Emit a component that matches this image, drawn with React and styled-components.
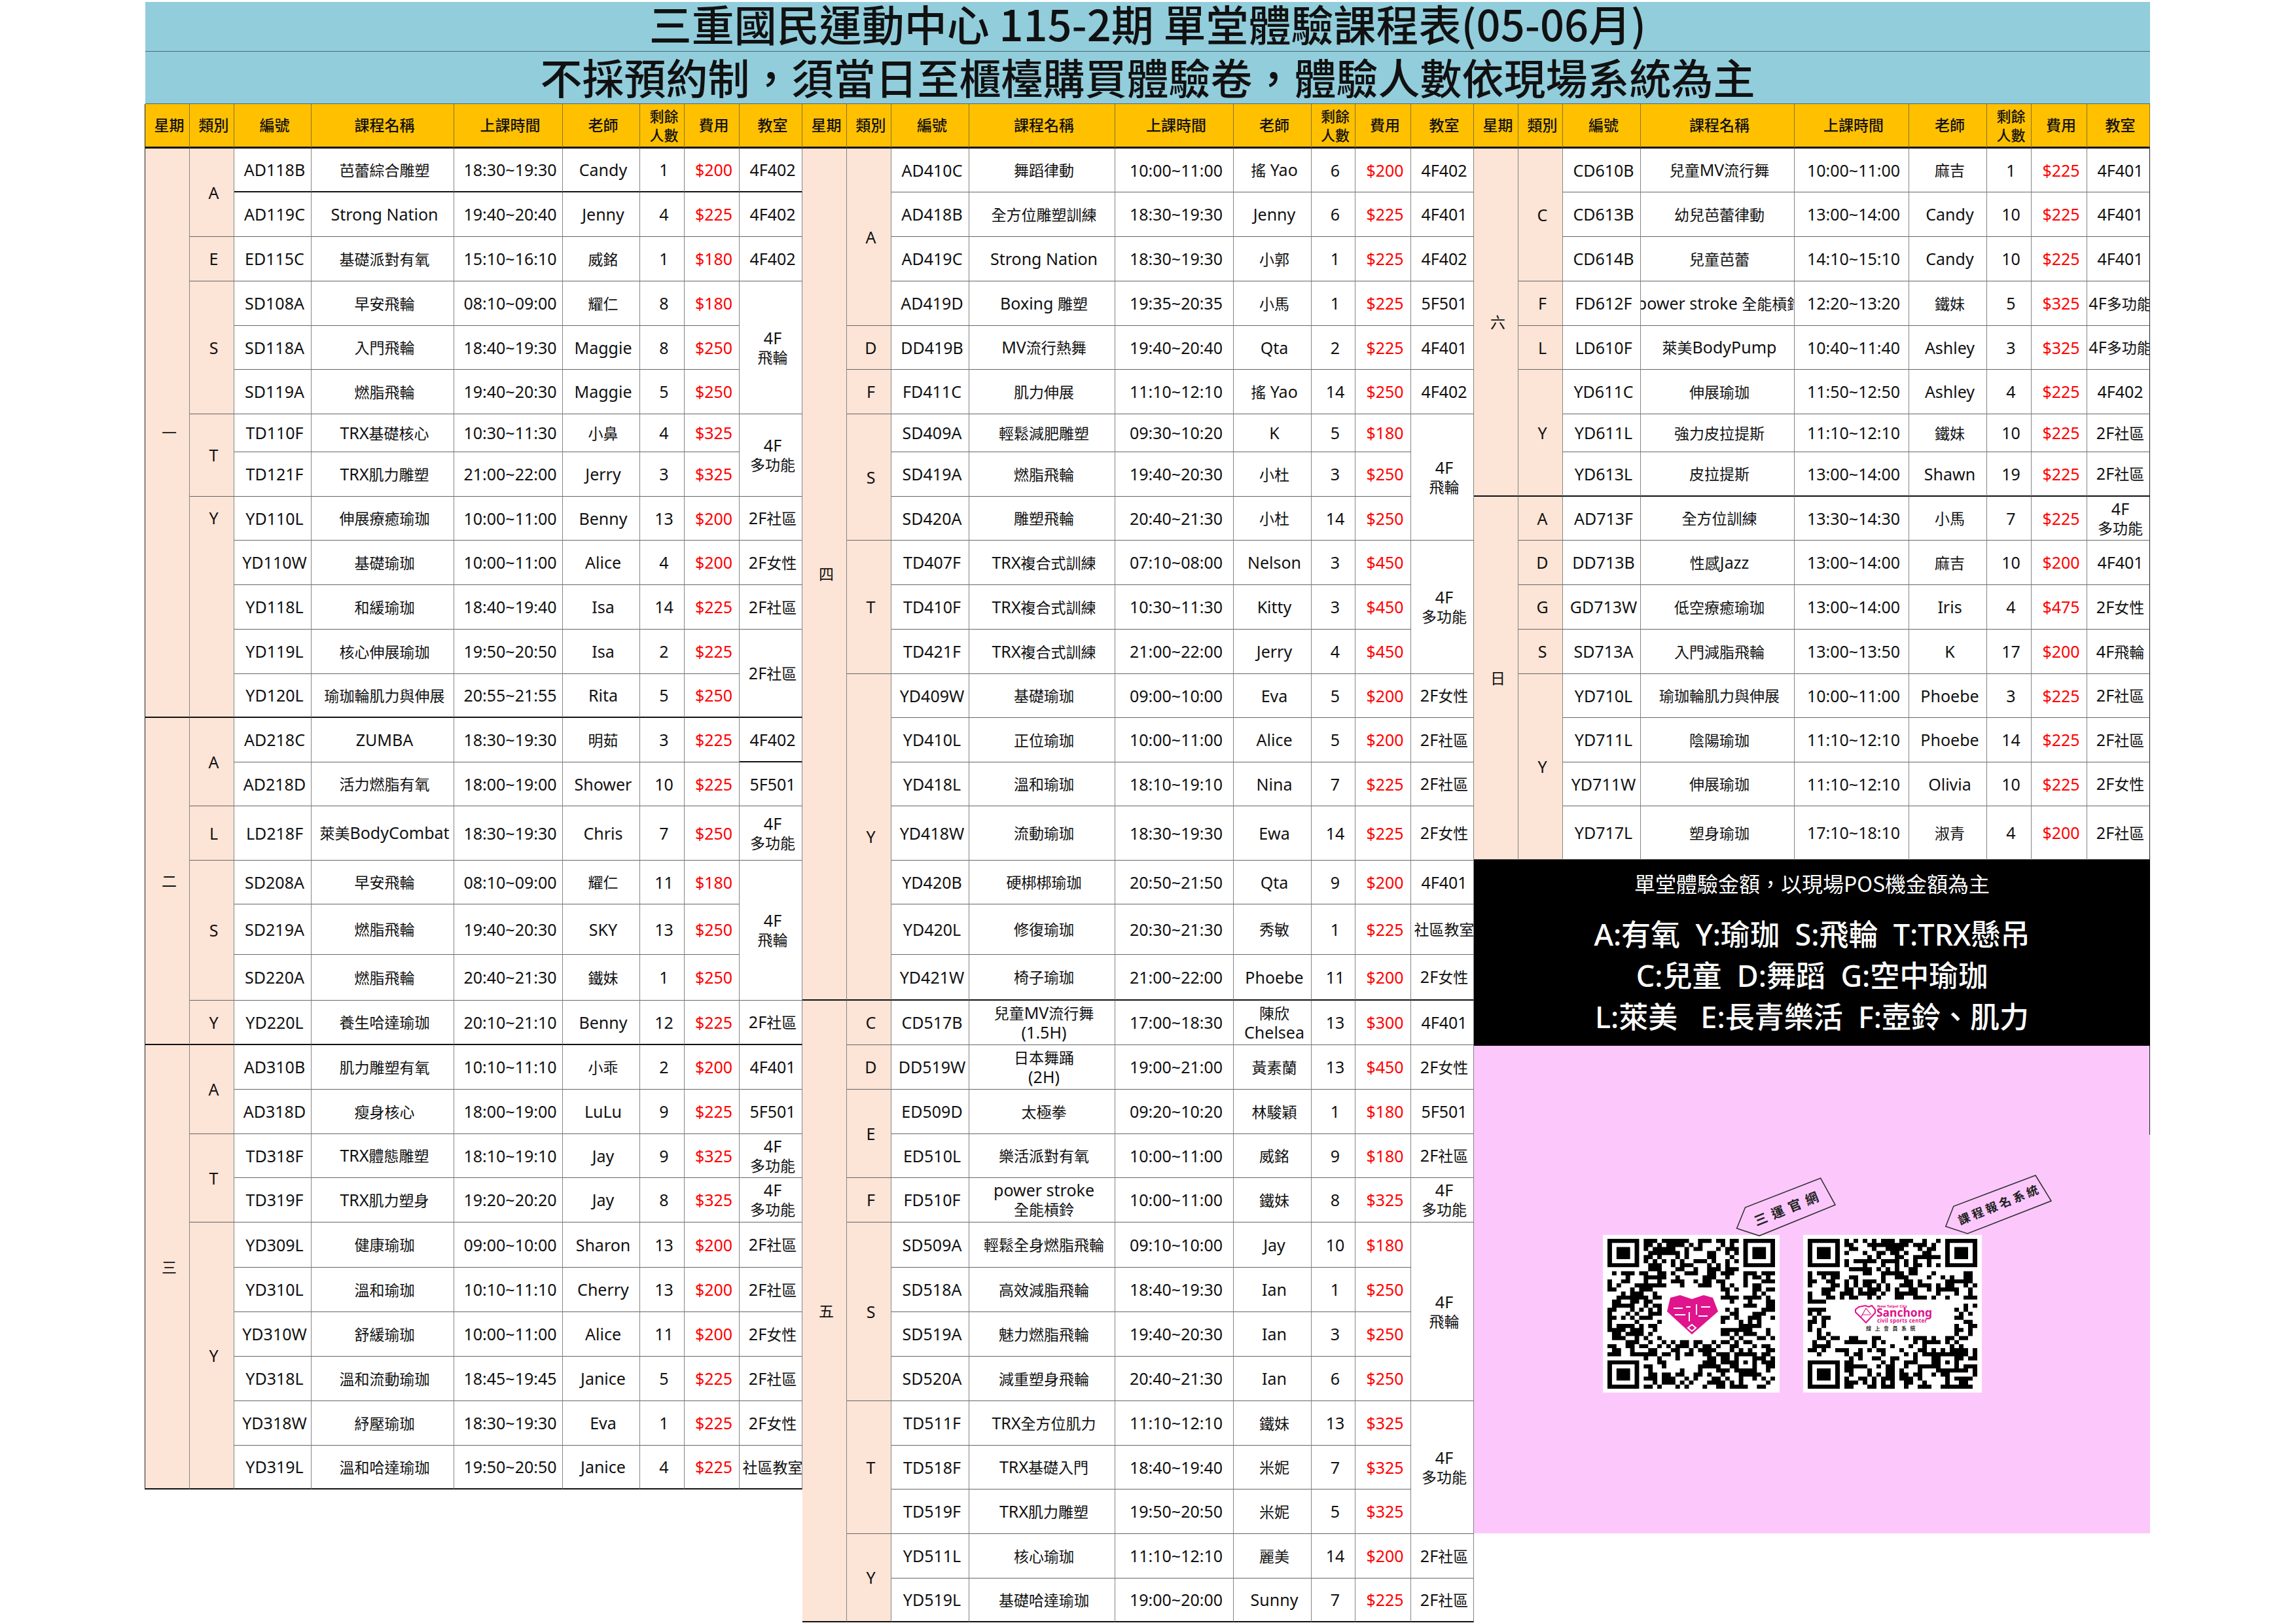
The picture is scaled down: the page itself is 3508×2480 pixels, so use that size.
import React from 'react';
import styled, { createGlobalStyle } from 'styled-components';

const GlobalStyle = createGlobalStyle`
  html, body {
    margin: 0;
    background: #fff;
    overflow: hidden;
  }
  body {
    font-family: "Noto Sans", "Noto Sans CJK TC", sans-serif;
    color: #111;
  }
  * {
    box-sizing: border-box;
  }
`;

// every block of the sheet shares the same row heights, it was one big spreadsheet
const ROW_H = [
  67, 68, 68, 68, 67, 68, 58, 68, 67, 68, 68, 68, 67, 68, 67, 83, 67, 77, 70, 68, 68, 68, 67, 68, 69,
  68, 68, 68, 68, 67, 68, 68, 67,
];

const r = (code, name, time, teacher, left, fee, room, span = 1) => ({
  code, name, time, teacher, left, fee, room, span,
});

const BLOCKS = [
  {
    cols: [68, 68, 118, 218, 166, 118, 68, 84, 96],
    days: [
      {
        day: '一',
        groups: [
          { type: 'A', rows: [
            r('AD118B', '芭蕾綜合雕塑', '18:30~19:30', 'Candy', 1, 200, '4F402'),
            r('AD119C', 'Strong Nation', '19:40~20:40', 'Jenny', 4, 225, '4F402'),
          ] },
          { type: 'E', rows: [r('ED115C', '基礎派對有氧', '15:10~16:10', '威銘', 1, 180, '4F402')] },
          { type: 'S', rows: [
            r('SD108A', '早安飛輪', '08:10~09:00', '耀仁', 8, 180, '4F\n飛輪', 3),
            r('SD118A', '入門飛輪', '18:40~19:30', 'Maggie', 8, 250, null),
            r('SD119A', '燃脂飛輪', '19:40~20:30', 'Maggie', 5, 250, null),
          ] },
          { type: 'T', rows: [
            r('TD110F', 'TRX基礎核心', '10:30~11:30', '小鼻', 4, 325, '4F\n多功能', 2),
            r('TD121F', 'TRX肌力雕塑', '21:00~22:00', 'Jerry', 3, 325, null),
          ] },
          { type: 'Y', top: true, rows: [
            r('YD110L', '伸展療癒瑜珈', '10:00~11:00', 'Benny', 13, 200, '2F社區'),
            r('YD110W', '基礎瑜珈', '10:00~11:00', 'Alice', 4, 200, '2F女性'),
            r('YD118L', '和緩瑜珈', '18:40~19:40', 'Isa', 14, 225, '2F社區'),
            r('YD119L', '核心伸展瑜珈', '19:50~20:50', 'Isa', 2, 225, '2F社區', 2),
            r('YD120L', '瑜珈輪肌力與伸展', '20:55~21:55', 'Rita', 5, 250, null),
          ] },
        ],
      },
      {
        day: '二',
        groups: [
          { type: 'A', rows: [
            r('AD218C', 'ZUMBA', '18:30~19:30', '明茹', 3, 225, '4F402'),
            r('AD218D', '活力燃脂有氧', '18:00~19:00', 'Shower', 10, 225, '5F501'),
          ] },
          { type: 'L', rows: [r('LD218F', '萊美BodyCombat', '18:30~19:30', 'Chris', 7, 250, '4F\n多功能')] },
          { type: 'S', rows: [
            r('SD208A', '早安飛輪', '08:10~09:00', '耀仁', 11, 180, '4F\n飛輪', 3),
            r('SD219A', '燃脂飛輪', '19:40~20:30', 'SKY', 13, 250, null),
            r('SD220A', '燃脂飛輪', '20:40~21:30', '鐵妹', 1, 250, null),
          ] },
          { type: 'Y', rows: [r('YD220L', '養生哈達瑜珈', '20:10~21:10', 'Benny', 12, 225, '2F社區')] },
        ],
      },
      {
        day: '三',
        groups: [
          { type: 'A', rows: [
            r('AD310B', '肌力雕塑有氧', '10:10~11:10', '小乖', 2, 200, '4F401'),
            r('AD318D', '瘦身核心', '18:00~19:00', 'LuLu', 9, 225, '5F501'),
          ] },
          { type: 'T', rows: [
            r('TD318F', 'TRX體態雕塑', '18:10~19:10', 'Jay', 9, 325, '4F\n多功能'),
            r('TD319F', 'TRX肌力塑身', '19:20~20:20', 'Jay', 8, 325, '4F\n多功能'),
          ] },
          { type: 'Y', rows: [
            r('YD309L', '健康瑜珈', '09:00~10:00', 'Sharon', 13, 200, '2F社區'),
            r('YD310L', '溫和瑜珈', '10:10~11:10', 'Cherry', 13, 200, '2F社區'),
            r('YD310W', '舒緩瑜珈', '10:00~11:00', 'Alice', 11, 200, '2F女性'),
            r('YD318L', '溫和流動瑜珈', '18:45~19:45', 'Janice', 5, 225, '2F社區'),
            r('YD318W', '紓壓瑜珈', '18:30~19:30', 'Eva', 1, 225, '2F女性'),
            r('YD319L', '溫和哈達瑜珈', '19:50~20:50', 'Janice', 4, 225, '社區教室'),
          ] },
        ],
      },
    ],
  },
  {
    cols: [68, 68, 119, 223, 181, 119, 67, 85, 96],
    days: [
      {
        day: '四',
        groups: [
          { type: 'A', rows: [
            r('AD410C', '舞蹈律動', '10:00~11:00', '搖 Yao', 6, 200, '4F402'),
            r('AD418B', '全方位雕塑訓練', '18:30~19:30', 'Jenny', 6, 225, '4F401'),
            r('AD419C', 'Strong Nation', '18:30~19:30', '小郭', 1, 225, '4F402'),
            r('AD419D', 'Boxing 雕塑', '19:35~20:35', '小馬', 1, 225, '5F501'),
          ] },
          { type: 'D', rows: [r('DD419B', 'MV流行熱舞', '19:40~20:40', 'Qta', 2, 225, '4F401')] },
          { type: 'F', rows: [r('FD411C', '肌力伸展', '11:10~12:10', '搖 Yao', 14, 250, '4F402')] },
          { type: 'S', rows: [
            r('SD409A', '輕鬆減肥雕塑', '09:30~10:20', 'K', 5, 180, '4F\n飛輪', 3),
            r('SD419A', '燃脂飛輪', '19:40~20:30', '小杜', 3, 250, null),
            r('SD420A', '雕塑飛輪', '20:40~21:30', '小杜', 14, 250, null),
          ] },
          { type: 'T', rows: [
            r('TD407F', 'TRX複合式訓練', '07:10~08:00', 'Nelson', 3, 450, '4F\n多功能', 3),
            r('TD410F', 'TRX複合式訓練', '10:30~11:30', 'Kitty', 3, 450, null),
            r('TD421F', 'TRX複合式訓練', '21:00~22:00', 'Jerry', 4, 450, null),
          ] },
          { type: 'Y', rows: [
            r('YD409W', '基礎瑜珈', '09:00~10:00', 'Eva', 5, 200, '2F女性'),
            r('YD410L', '正位瑜珈', '10:00~11:00', 'Alice', 5, 200, '2F社區'),
            r('YD418L', '溫和瑜珈', '18:10~19:10', 'Nina', 7, 225, '2F社區'),
            r('YD418W', '流動瑜珈', '18:30~19:30', 'Ewa', 14, 225, '2F女性'),
            r('YD420B', '硬梆梆瑜珈', '20:50~21:50', 'Qta', 9, 200, '4F401'),
            r('YD420L', '修復瑜珈', '20:30~21:30', '秀敏', 1, 225, '社區教室'),
            r('YD421W', '椅子瑜珈', '21:00~22:00', 'Phoebe', 11, 200, '2F女性'),
          ] },
        ],
      },
      {
        day: '五',
        groups: [
          { type: 'C', rows: [r('CD517B', '兒童MV流行舞\n(1.5H)', '17:00~18:30', '陳欣\nChelsea', 13, 300, '4F401')] },
          { type: 'D', rows: [r('DD519W', '日本舞踊\n(2H)', '19:00~21:00', '黃素蘭', 13, 450, '2F女性')] },
          { type: 'E', rows: [
            r('ED509D', '太極拳', '09:20~10:20', '林駿穎', 1, 180, '5F501'),
            r('ED510L', '樂活派對有氧', '10:00~11:00', '威銘', 9, 180, '2F社區'),
          ] },
          { type: 'F', rows: [r('FD510F', 'power stroke\n全能槓鈴', '10:00~11:00', '鐵妹', 8, 325, '4F\n多功能')] },
          { type: 'S', rows: [
            r('SD509A', '輕鬆全身燃脂飛輪', '09:10~10:00', 'Jay', 10, 180, '4F\n飛輪', 4),
            r('SD518A', '高效減脂飛輪', '18:40~19:30', 'Ian', 1, 250, null),
            r('SD519A', '魅力燃脂飛輪', '19:40~20:30', 'Ian', 3, 250, null),
            r('SD520A', '減重塑身飛輪', '20:40~21:30', 'Ian', 6, 250, null),
          ] },
          { type: 'T', rows: [
            r('TD511F', 'TRX全方位肌力', '11:10~12:10', '鐵妹', 13, 325, '4F\n多功能', 3),
            r('TD518F', 'TRX基礎入門', '18:40~19:40', '米妮', 7, 325, null),
            r('TD519F', 'TRX肌力雕塑', '19:50~20:50', '米妮', 5, 325, null),
          ] },
          { type: 'Y', rows: [
            r('YD511L', '核心瑜珈', '11:10~12:10', '麗美', 14, 200, '2F社區'),
            r('YD519L', '基礎哈達瑜珈', '19:00~20:00', 'Sunny', 7, 225, '2F社區'),
          ] },
        ],
      },
    ],
  },
  {
    cols: [68, 68, 119, 235, 175, 119, 68, 85, 96],
    days: [
      {
        day: '六',
        groups: [
          { type: 'C', rows: [
            r('CD610B', '兒童MV流行舞', '10:00~11:00', '麻吉', 1, 225, '4F401'),
            r('CD613B', '幼兒芭蕾律動', '13:00~14:00', 'Candy', 10, 225, '4F401'),
            r('CD614B', '兒童芭蕾', '14:10~15:10', 'Candy', 10, 225, '4F401'),
          ] },
          { type: 'F', rows: [r('FD612F', 'power stroke 全能槓鈴', '12:20~13:20', '鐵妹', 5, 325, '4F多功能')] },
          { type: 'L', rows: [r('LD610F', '萊美BodyPump', '10:40~11:40', 'Ashley', 3, 325, '4F多功能')] },
          { type: 'Y', rows: [
            r('YD611C', '伸展瑜珈', '11:50~12:50', 'Ashley', 4, 225, '4F402'),
            r('YD611L', '強力皮拉提斯', '11:10~12:10', '鐵妹', 10, 225, '2F社區'),
            r('YD613L', '皮拉提斯', '13:00~14:00', 'Shawn', 19, 225, '2F社區'),
          ] },
        ],
      },
      {
        day: '日',
        groups: [
          { type: 'A', rows: [r('AD713F', '全方位訓練', '13:30~14:30', '小馬', 7, 225, '4F\n多功能')] },
          { type: 'D', rows: [r('DD713B', '性感Jazz', '13:00~14:00', '麻吉', 10, 200, '4F401')] },
          { type: 'G', rows: [r('GD713W', '低空療癒瑜珈', '13:00~14:00', 'Iris', 4, 475, '2F女性')] },
          { type: 'S', rows: [r('SD713A', '入門減脂飛輪', '13:00~13:50', 'K', 17, 200, '4F飛輪')] },
          { type: 'Y', rows: [
            r('YD710L', '瑜珈輪肌力與伸展', '10:00~11:00', 'Phoebe', 3, 225, '2F社區'),
            r('YD711L', '陰陽瑜珈', '11:10~12:10', 'Phoebe', 14, 225, '2F社區'),
            r('YD711W', '伸展瑜珈', '11:10~12:10', 'Olivia', 10, 225, '2F女性'),
            r('YD717L', '塑身瑜珈', '17:10~18:10', '淑青', 4, 200, '2F社區'),
          ] },
        ],
      },
    ],
  },
];

const HEADINGS = ['星期', '類別', '編號', '課程名稱', '上課時間', '老師', '剩餘\n人數', '費用', '教室'];

const Sheet = styled.div`
  width: 3063px;
  margin-left: 222px;
  padding-top: 3px;
`;

const TitleBar = styled.h1`
  margin: 0;
  height: ${(p) => p.$height}px;
  padding-bottom: ${(p) => p.$lift}px;
  display: flex;
  align-items: center;
  justify-content: center;
  background: #92cddc;
  border-bottom: 1px solid #4d6a72;
  font-family: "Noto Sans CJK TC", sans-serif;
  font-size: ${(p) => p.$size}px;
  font-weight: 500;
  line-height: 1;
  white-space: pre;
`;

const Blocks = styled.div`
  display: flex;
  align-items: flex-start;
`;

const Column = styled.div`
  display: flex;
  flex-direction: column;
`;

const Grid = styled.section`
  display: grid;
  grid-template-columns: ${(p) => p.$cols.map((c) => `${c}px`).join(' ')};
  grid-template-rows: 68px ${(p) => p.$rows.map((h) => `${h}px`).join(' ')};
  border-left: ${(p) => (p.$first ? '1px solid #222' : 'none')};
  margin-left: ${(p) => (p.$first ? '-1px' : '0')};
`;

const Cell = styled.div`
  grid-row: span ${(p) => p.$span || 1};
  display: flex;
  align-items: center;
  justify-content: center;
  overflow: hidden;
  white-space: pre;
  text-align: center;
  padding-left: 6px;
  font-size: 25px;
  line-height: 29px;
  background: #fff;
  border-right: 1px solid ${(p) => (p.$edge ? '#222' : '#858585')};
  border-bottom: ${(p) => (p.$heavy ? '2px solid #111' : '1px solid #666')};
`;

const HeadCell = styled(Cell)`
  background: #ffc000;
  font-size: 23px;
  font-weight: 500;
  border-right-color: #8a7420;
  border-bottom: 3px solid #111;

  ${(p) => p.$tight && 'font-size: 22px;'}
`;

const PeachCell = styled(Cell)`
  background: #fce4d6;
`;

const TypeCell = styled(PeachCell)`
  align-items: ${(p) => (p.$top ? 'flex-start' : 'center')};
  padding-top: ${(p) => (p.$top ? '18px' : '0')};
`;

const FeeCell = styled(Cell)`
  color: #f00;
`;

const Label = styled.span`
  flex-shrink: 0;
`;

const Cjk = styled.span`
  font-size: 23px;
`;

// the sheet mixes a 25px latin with a 23px CJK face
const Txt = ({ children }) => (
  <Label>
    {String(children)
      .split(/([\u3000-\u9fff\uff00-\uffef]+)/)
      .map((part, i) => (i % 2 ? <Cjk key={i}>{part}</Cjk> : part))}
  </Label>
);

const Legend = styled.div`
  height: 284px;
  margin-top: -1px;
  background: #000;
  color: #fff;
  text-align: center;
  font-family: "Noto Sans CJK TC", sans-serif;
  white-space: pre;
`;

const LegendNote = styled.div`
  height: 70px;
  margin-bottom: 12px;
  display: flex;
  align-items: center;
  justify-content: center;
  font-size: 32px;
`;

const LegendLine = styled.div`
  font-family: "Noto Sans", "Noto Sans CJK TC", sans-serif;
  font-size: 45px;
  font-weight: 500;
  line-height: 63px;
`;

const PinkPanel = styled.div`
  position: relative;
  height: 745px;
  padding: 289px 0 0 197px;
  background: #fcc8fc;
  display: flex;
  gap: 36px;
  align-items: flex-start;

  &::after {
    content: '';
    position: absolute;
    top: 0;
    right: 0;
    width: 1px;
    height: 136px;
    background: #222;
  }
`;

const QrBox = styled.div`
  position: relative;
  flex: none;
  width: ${(p) => p.$width}px;
  height: 241px;
  padding: 6px 7px;
  background: #fff;
`;

const QrSvg = styled.svg`
  display: block;
  width: 100%;
  height: 100%;
  filter: blur(0.5px);
`;

const Tag = styled.svg`
  position: absolute;
  left: 200px;
  top: -100px;
  width: 190px;
  height: 105px;
  overflow: visible;
`;

const LogoSvg = styled.svg`
  position: absolute;
  left: 0;
  top: 0;
  width: 100%;
  height: 100%;
`;

function buildQr(seed, clear) {
  const size = 37;
  let s = seed;
  const next = () => {
    s = (s * 1664525 + 1013904223) >>> 0;
    return (s >>> 16) & 1;
  };
  const cells = [];
  for (let y = 0; y < size; y++) {
    cells.push([]);
    for (let x = 0; x < size; x++) cells[y].push(next() === 1);
  }
  const finder = (ox, oy) => {
    for (let y = -1; y <= 7; y++) {
      for (let x = -1; x <= 7; x++) {
        const cx = ox + x;
        const cy = oy + y;
        if (cx < 0 || cy < 0 || cx >= size || cy >= size) continue;
        const ring = x === 0 || x === 6 || y === 0 || y === 6;
        const core = x >= 2 && x <= 4 && y >= 2 && y <= 4;
        const inside = x >= 0 && x <= 6 && y >= 0 && y <= 6;
        cells[cy][cx] = inside && (ring || core);
      }
    }
  };
  finder(0, 0);
  finder(30, 0);
  finder(0, 30);
  for (let y = 28; y <= 32; y++) {
    for (let x = 28; x <= 32; x++) {
      cells[y][x] = x === 28 || x === 32 || y === 28 || y === 32 || (x === 30 && y === 30);
    }
  }
  let d = '';
  for (let y = 0; y < size; y++) {
    for (let x = 0; x < size; x++) {
      const hidden = x >= clear[0] && x < clear[2] && y >= clear[1] && y < clear[3];
      if (cells[y][x] && !hidden) d += `M${x} ${y}h1v1h-1z`;
    }
  }
  return d;
}

const QrCode = ({ seed, clear }) => (
  <QrSvg viewBox="0 0 37 37" preserveAspectRatio="none">
    <path d={buildQr(seed, clear)} fill="#000" />
  </QrSvg>
);

const DiamondLogo = () => (
  <LogoSvg viewBox="0 0 270 241">
    <path d="M103 96 L118 92 L136 98 L154 92 L168 96 L176 117 L136 152 L98 117 Z" fill="#e0148c" />
    <path d="M108 112h14M127 110h7M143 106v16M150 110h14M110 122h16M132 118v14M146 124h14M130 142l6 5l6-5l-6-5z" stroke="#fff" strokeWidth="2" fill="none" />
  </LogoSvg>
);

const SanchongLogo = () => (
  <LogoSvg viewBox="0 0 273 241">
    <path d="M85 110 L95 108 L100 110 L105 108 L110 114 L110 119 L96 134 L80 118 L80 114 Z" fill="none" stroke="#e0148c" strokeWidth="2" />
    <path d="M96 112 L88 126 M96 112 L104 122 M90 122h12" fill="none" stroke="#e0148c" strokeWidth="1.2" />
    <text x="113" y="111" fontSize="6" fontWeight="700" fill="#e0148c" fontFamily="Noto Sans">New Taipei City</text>
    <text x="112" y="125" fontSize="17" fontWeight="700" fill="#e0148c" fontFamily="Noto Sans" textLength="85" lengthAdjust="spacingAndGlyphs">Sanchong</text>
    <text x="113" y="134" fontSize="8" fontWeight="700" fill="#e0148c" fontFamily="Noto Sans" textLength="76">civil sports center</text>
    <text x="96" y="146" fontSize="8" fontWeight="700" fill="#333" fontFamily="Noto Sans CJK TC" letterSpacing="5.5">線上會員系統</text>
  </LogoSvg>
);

const tagText = { fontFamily: '"Noto Sans CJK TC", sans-serif', fontWeight: 700 };

const QrSection = () => (
  <PinkPanel>
    <QrBox $width={270}>
      <QrCode seed={71} clear={[12, 12, 25, 25]} />
      <DiamondLogo />
      <Tag viewBox="0 0 190 105">
        <polygon points="132.7,13.3 155,54 39,101.3 4.6,90 17.5,58" fill="none" stroke="#333" strokeWidth="1.6" />
        <text x="84" y="66" textAnchor="middle" fontSize="20" letterSpacing="8" fill="#222" style={tagText} transform="rotate(-22 84 59)">三運官網</text>
      </Tag>
    </QrBox>
    <QrBox $width={273}>
      <QrCode seed={2024} clear={[5, 15, 32, 24]} />
      <SanchongLogo />
      <Tag viewBox="0 0 190 105">
        <polygon points="155,9 179,48 51,98 17.8,87 29.8,56.3" fill="none" stroke="#333" strokeWidth="1.6" />
        <text x="100" y="60" textAnchor="middle" fontSize="18" letterSpacing="4.5" fill="#222" style={tagText} transform="rotate(-22 100 53)">課程報名系統</text>
      </Tag>
    </QrBox>
  </PinkPanel>
);

const countRows = (day) => day.groups.reduce((n, g) => n + g.rows.length, 0);

const STRONG_ROWS = ['AD118B'];
const STRONG_ROOMS = ['AD118B', 'AD218C'];

const Block = ({ block, first, edge }) => {
  const total = block.days.reduce((n, d) => n + countRows(d), 0);
  return (
    <Grid $cols={block.cols} $rows={ROW_H.slice(0, total)} $first={first}>
      {HEADINGS.map((h, i) => (
        <HeadCell key={h} $edge={edge && i === 8} $tight={i === 6}>
          <Label>{h}</Label>
        </HeadCell>
      ))}
      {block.days.map((day) => {
        const dayRows = countRows(day);
        let done = 0;
        return (
          <React.Fragment key={day.day}>
            {day.groups.map((group) =>
              group.rows.map((row, i) => {
                const index = done++;
                const last = index === dayRows - 1;
                const strong = STRONG_ROWS.includes(row.code);
                const heavy = last || strong;
                const groupEnds = index + group.rows.length - i === dayRows;
                return (
                  <React.Fragment key={row.code}>
                    {index === 0 && (
                      <PeachCell $span={dayRows} $heavy>
                        <Txt>{day.day}</Txt>
                      </PeachCell>
                    )}
                    {i === 0 && (
                      <TypeCell $span={group.rows.length} $top={group.top} $heavy={groupEnds}>
                        <Label>{group.type}</Label>
                      </TypeCell>
                    )}
                    <Cell $heavy={heavy}><Txt>{row.code}</Txt></Cell>
                    <Cell $heavy={heavy}><Txt>{row.name}</Txt></Cell>
                    <Cell $heavy={heavy}><Txt>{row.time}</Txt></Cell>
                    <Cell $heavy={heavy}><Txt>{row.teacher}</Txt></Cell>
                    <Cell $heavy={heavy}><Txt>{row.left}</Txt></Cell>
                    <FeeCell $heavy={heavy}><Txt>{`$${row.fee}`}</Txt></FeeCell>
                    {row.room && (
                      <Cell
                        $span={row.span}
                        $edge={edge}
                        $heavy={index + row.span === dayRows || STRONG_ROOMS.includes(row.code)}
                      >
                        <Txt>{row.room}</Txt>
                      </Cell>
                    )}
                  </React.Fragment>
                );
              })
            )}
          </React.Fragment>
        );
      })}
    </Grid>
  );
};

const App = () => (
  <>
    <GlobalStyle />
    <Sheet>
      <TitleBar $height={76} $size={65} $lift={10}>三重國民運動中心 115-2期 單堂體驗課程表(05-06月)</TitleBar>
      <TitleBar $height={80} $size={64} $lift={6}>不採預約制，須當日至櫃檯購買體驗卷，體驗人數依現場系統為主</TitleBar>
      <Blocks>
        <Block block={BLOCKS[0]} first />
        <Block block={BLOCKS[1]} />
        <Column>
          <Block block={BLOCKS[2]} edge />
          <Legend>
            <LegendNote>單堂體驗金額，以現場POS機金額為主</LegendNote>
            <LegendLine>A:有氧  Y:瑜珈  S:飛輪  T:TRX懸吊</LegendLine>
            <LegendLine>C:兒童  D:舞蹈  G:空中瑜珈</LegendLine>
            <LegendLine>L:萊美   E:長青樂活  F:壺鈴、肌力</LegendLine>
          </Legend>
          <QrSection />
        </Column>
      </Blocks>
    </Sheet>
  </>
);

export default App;
